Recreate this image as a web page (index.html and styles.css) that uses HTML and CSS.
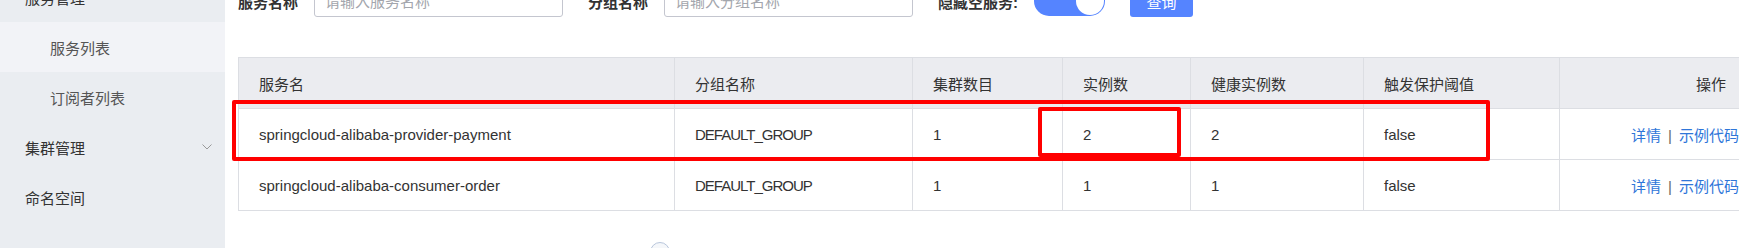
FILE: index.html
```html
<!DOCTYPE html>
<html lang="zh-CN">
<head>
  <meta charset="UTF-8" />
  <meta name="viewport" content="width=device-width, initial-scale=1.0"/>
  <title>服务列表 - Nacos</title>
  <link rel="stylesheet" href="styles.css">
</head>
<body>
  <div class="layout">
    <aside class="sidebar">
      <div class="nav-item top">
        <span>服务管理</span>
        <svg class="chevron" width="10" height="6" viewBox="0 0 10 6"><path d="M0.5 5.5 L5 1 L9.5 5.5" fill="none" stroke="#999" stroke-width="1"/></svg>
      </div>
      <div class="nav-item sub active">服务列表</div>
      <div class="nav-item sub">订阅者列表</div>
      <div class="nav-item top">
        <span>集群管理</span>
        <svg class="chevron" width="10" height="6" viewBox="0 0 10 6"><path d="M0.5 0.5 L5 5 L9.5 0.5" fill="none" stroke="#999" stroke-width="1"/></svg>
      </div>
      <div class="nav-item top">命名空间</div>
    </aside>

    <main class="content">
      <div class="search-bar">
        <div class="field">
          <label>服务名称</label>
          <input type="text" placeholder="请输入服务名称">
        </div>
        <div class="field">
          <label>分组名称</label>
          <input type="text" placeholder="请输入分组名称">
        </div>
        <div class="field">
          <label>隐藏空服务:</label>
          <span class="switch"><span class="knob"></span></span>
        </div>
        <button class="btn-query">查询</button>
      </div>

      <table class="service-table">
        <colgroup>
          <col style="width:436px">
          <col style="width:238px">
          <col style="width:150px">
          <col style="width:128px">
          <col style="width:173px">
          <col style="width:196px">
          <col>
        </colgroup>
        <thead>
          <tr>
            <th>服务名</th>
            <th>分组名称</th>
            <th>集群数目</th>
            <th>实例数</th>
            <th>健康实例数</th>
            <th>触发保护阈值</th>
            <th class="ops">操作</th>
          </tr>
        </thead>
        <tbody>
          <tr>
            <td>springcloud-alibaba-provider-payment</td>
            <td class="group">DEFAULT_GROUP</td>
            <td>1</td>
            <td>2</td>
            <td>2</td>
            <td>false</td>
            <td class="ops"><a href="#">详情</a><span class="sep">|</span><a href="#">示例代码</a></td>
          </tr>
          <tr>
            <td>springcloud-alibaba-consumer-order</td>
            <td class="group">DEFAULT_GROUP</td>
            <td>1</td>
            <td>1</td>
            <td>1</td>
            <td>false</td>
            <td class="ops"><a href="#">详情</a><span class="sep">|</span><a href="#">示例代码</a></td>
          </tr>
        </tbody>
      </table>

      <div class="pager">
        <span class="page-btn"></span>
      </div>
    </main>
  </div>

  <!-- annotation boxes drawn over the table -->
  <div class="mark mark-row"></div>
  <div class="mark mark-count"></div>
</body>
</html>
```

FILE: styles.css
```css
html, body {
  margin: 0;
  width: 1739px;
  height: 248px;
  overflow: hidden;
  background: #fff;
}
body {
  position: relative;
  font-family: "Liberation Sans", "Noto Sans CJK SC", sans-serif;
  font-size: 15px;
  color: #333;
}
.layout {
  display: flex;
  margin-top: -28px;
}

/* sidebar */
.sidebar {
  width: 225px;
  flex-shrink: 0;
  background: #eaedf1;
  height: 300px;
}
.nav-item {
  height: 50px;
  display: flex;
  align-items: center;
  justify-content: space-between;
  padding: 0 13px 0 25px;
}
.nav-item.top {
  color: #333;
}
.nav-item.sub {
  padding-left: 50px;
  color: #555;
}
.nav-item.active {
  background: #f2f3f7;
}
.chevron {
  display: block;
}

/* main */
.content {
  flex: 1;
  padding: 13px 0 0 13px;
}
.search-bar {
  display: flex;
  align-items: center;
  height: 32px;
}
.field {
  display: flex;
  align-items: center;
  margin-right: 25px;
}
.field label {
  font-weight: bold;
  color: #333;
  margin-right: 16px;
}
.field input {
  width: 249px;
  height: 32px;
  box-sizing: border-box;
  border: 1px solid #c4c6cf;
  border-radius: 3px;
  padding: 0 10px;
  font-family: inherit;
  font-size: 15px;
  outline: none;
}
.field input::placeholder {
  color: #a3a6ad;
}
.switch {
  display: flex;
  justify-content: flex-end;
  align-items: center;
  width: 71px;
  height: 30px;
  box-sizing: border-box;
  padding: 1px;
  border-radius: 15px;
  background: #5584ff;
}
.switch .knob {
  width: 28px;
  height: 28px;
  border-radius: 50%;
  background: #fff;
}
.btn-query {
  width: 63px;
  height: 32px;
  border: none;
  border-radius: 3px;
  background: #5584ff;
  color: #fff;
  font-family: inherit;
  font-size: 15px;
  padding: 0;
}

/* table */
.service-table {
  margin-top: 40px;
  width: 1509px;
  table-layout: fixed;
  border-collapse: collapse;
  border: 1px solid #dcdee3;
}
.service-table th,
.service-table td {
  height: 51px;
  padding: 0 20px;
  border: 1px solid #dcdee3;
  text-align: left;
  font-weight: normal;
  white-space: nowrap;
  box-sizing: border-box;
}
.service-table th {
  background: #ebecf0;
  color: #333;
}
.service-table td.group {
  letter-spacing: -1px;
}
.service-table th.ops {
  text-align: right;
}
.service-table td.ops {
  text-align: right;
  padding-right: 7px;
}
.service-table a {
  color: #2f76d9;
  text-decoration: none;
}
.sep {
  margin: 0 7px;
  color: #666;
}

.pager {
  margin-top: 31px;
  padding-left: 412px;
}
.page-btn {
  display: block;
  width: 18px;
  height: 18px;
  border-radius: 50%;
  border: 1px solid #b8c6dc;
  background: #f5f7fa;
}

/* red annotation boxes */
.mark {
  position: absolute;
  box-sizing: border-box;
  border: 4px solid #ff0000;
  border-radius: 2px;
}
.mark-row {
  left: 232px;
  top: 100px;
  width: 1258px;
  height: 61px;
}
.mark-count {
  left: 1038px;
  top: 107px;
  width: 143px;
  height: 50px;
}
```
